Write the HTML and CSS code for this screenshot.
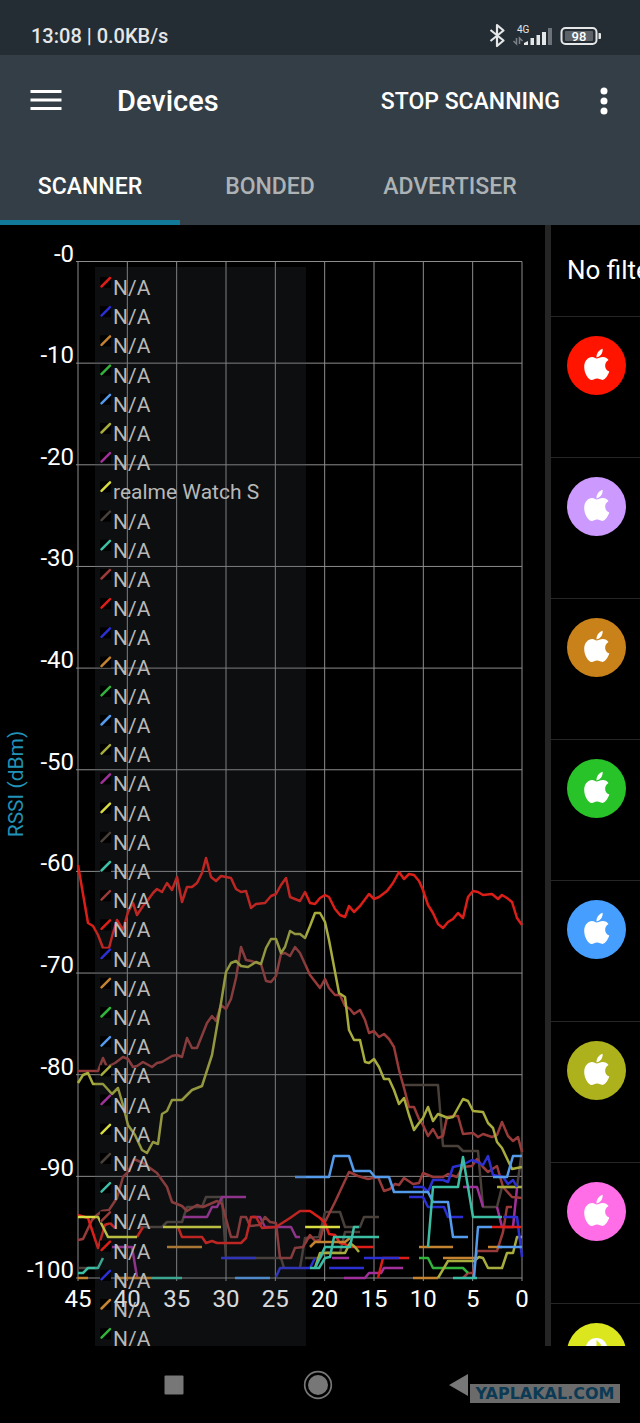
FILE: index.html
```html
<!DOCTYPE html>
<html lang="en">
<head>
    <meta charset="UTF-8">
    <meta name="viewport" content="width=device-width, initial-scale=1.0">
    <title>Devices</title>
    <link rel="stylesheet" href="styles.css">
</head>
<body>
    <div class="status-bar">
        <span>13:08 | 0.0KB/s</span>
        <svg class="status-icons" width="114" height="28" viewBox="488 22 114 28">
            <path d="M490.500 30L503.500 40.500L497 46V25L503.500 30.500L490.500 41" fill="none" stroke="#e4e6e8" stroke-width="2.200" stroke-linejoin="round"/>
            <text x="517" y="33" class="net-label">4G</text>
            <path d="M516.500 38v6l-3-3M519.500 44v-6l3 3" fill="none" stroke="#7c8186" stroke-width="1.500"/>
            <path d="M524 45v-2l4-2v4zM530.500 45v-7h3.500v7zM536.500 45v-10h3.500v10zM542 45v-13h4v13z" fill="#e4e6e8"/>
            <path d="M548 45v-17h4v17z" fill="#6c7277"/>
            <rect x="561.500" y="28" width="35" height="16" rx="4" fill="none" stroke="#e4e6e8" stroke-width="2"/>
            <rect x="565" y="31" width="28" height="10" rx="1" fill="#5c6268"/>
            <path d="M598.500 33h1.500q1 0 1 1v4q0 1-1 1h-1.500z" fill="#e4e6e8"/>
            <text x="579" y="41" class="battery-label">98</text>
        </svg>
    </div>

    <header>
        <div class="toolbar">
            <button class="icon-button" type="button" aria-label="Menu">
                <svg width="32" height="24" viewBox="0 0 32 24">
                    <path d="M0.500 2.500h31M0.500 11h31M0.500 19.500h31" stroke="#fff" stroke-width="3"/>
                </svg>
            </button>
            <h1>Devices</h1>
            <button class="scan-button" type="button">STOP SCANNING</button>
            <button class="icon-button" type="button" aria-label="More options">
                <svg width="8" height="28" viewBox="0 0 8 28" fill="#fff">
                    <circle cx="4" cy="4" r="3.500"/>
                    <circle cx="4" cy="14" r="3.500"/>
                    <circle cx="4" cy="24" r="3.500"/>
                </svg>
            </button>
        </div>
        <nav class="tabs">
            <button class="tab active" type="button">SCANNER</button>
            <button class="tab" type="button">BONDED</button>
            <button class="tab" type="button">ADVERTISER</button>
        </nav>
    </header>

    <main>
        <svg class="chart" viewBox="0 225 545 1121" preserveAspectRatio="xMidYMin meet">
            <g id="grid"></g>
            <g class="series">
                <g class="brown">
                    <polyline points="404,1085 438,1085 443,1146 458,1146 463,1151 478,1151 483,1207 497,1207 502,1187 517,1187 522,1151"/>
                    <polyline points="300,1268 305,1238 319,1237 325,1212 340,1212 345,1227 360,1227 364,1217 379,1217"/>
                    <polyline points="305,1258 320,1258 325,1252 340,1253 345,1232 360,1232"/>
                    <polyline points="138,1227 162,1227 167,1222 182,1222 187,1207 202,1207 206,1197 222,1197 226,1258 281,1258 284,1268"/>
                    <polyline points="78,1268 97,1268"/>
                </g>
                <g class="purple">
                    <polyline points="112,1247 132,1247 137,1277"/>
                    <polyline points="183,1217 207,1217 212,1207 217,1207 222,1197 246,1197"/>
                    <polyline points="252,1217 260,1217 265,1227 291,1227 296,1237 300,1237"/>
                    <polyline points="332,1258 349,1258"/>
                    <polyline points="344,1278 365,1278 369,1273 381,1273 384,1268 403,1268"/>
                    <polyline points="463,1187 477,1187 483,1207"/>
                    <polyline points="497,1207 502,1227 513,1227 517,1188"/>
                </g>
                <g class="maroon">
                    <polyline points="78,1071 98,1071 103,1058 107,1067 115,1063 123,1057 128,1059 133,1067 137,1066 143,1062 152,1067 157,1063 162,1062 172,1056 177,1055 182,1057 187,1038 192,1048 197,1048 207,1023 212,1016 216,1021 221,1005 226,1009 231,999 236,978 241,947 246,960 251,961 261,964 266,981 271,982 276,976 281,954 285,953 290,956 295,947 300,953 305,964 310,975 320,988 325,979 329,988 335,995 340,995 345,1006 350,1009 354,1014 360,1010 365,1020 369,1033 374,1031 379,1037 384,1034 389,1039 394,1047 399,1070 404,1088 409,1107 414,1107 419,1119 423,1125 428,1136 433,1129 438,1138 443,1136 447,1117 453,1116 458,1116 463,1134 473,1133 478,1137 483,1134 492,1137 497,1135 502,1122 508,1136 513,1141 518,1137 522,1152"/>
                    <polyline points="78,1240 83,1239 92,1220 97,1215 102,1211 109,1210 117,1198 123,1177 128,1172 134,1159 143,1163 157,1173 167,1187 172,1202 182,1206 187,1211 197,1205 203,1207 217,1201 222,1204 231,1237 237,1237 241,1217 246,1217 250,1226 260,1225 265,1217 270,1222 276,1223 280,1258 291,1258 295,1248 303,1247 310,1235 315,1241 320,1240 325,1222 335,1202 349,1172 358,1176 368,1179 378,1177 384,1191 390,1189 395,1184 399,1185 404,1178 413,1184 419,1183 423,1173 433,1177 443,1177 448,1174 457,1177 463,1167 472,1166 477,1159 483,1167 488,1172 497,1166 503,1187 512,1197 522,1198"/>
                    <polyline points="463,1278 468,1273 473,1273 477,1251 497,1251 503,1232 507,1207 512,1207"/>
                </g>
                <g class="red">
                    <polyline points="78,865 88,923 93,926 98,935 103,948 109,948 113,933 117,920 123,930 128,912 133,903 137,915 143,906 148,900 153,893 157,889 162,892 167,883 172,890 177,877 182,902 187,887 192,887 197,883 202,873 206,858 211,877 216,881 221,876 231,878 236,889 241,892 246,891 251,908 256,904 265,903 271,896 276,894 281,885 286,878 290,897 295,899 300,901 305,892 310,903 315,904 320,898 325,895 329,897 335,909 340,915 345,917 349,906 354,912 360,906 369,894 374,899 379,897 387,891 393,883 399,872 404,879 409,874 414,875 419,881 423,890 428,905 433,913 438,924 443,928 448,922 453,919 458,913 463,918 468,897 473,891 478,892 483,895 492,894 498,899 502,895 507,898 512,902 517,918 522,925"/>
                    <polyline points="78,1215 88,1218 98,1248 105,1225 110,1223 115,1228"/>
                    <polyline points="137,1237 143,1227"/>
                    <polyline points="178,1227 182,1237 202,1237 206,1243 212,1241 217,1243 241,1243 246,1238 251,1217 256,1217 262,1228 276,1227 290,1218 300,1211 310,1211 320,1218 325,1223 329,1234 335,1235 340,1243 345,1244 350,1247 374,1247"/>
                    <polyline points="378,1278 383,1258 409,1258"/>
                </g>
                <g class="orange">
                    <polyline points="78,1278 88,1278"/>
                    <polyline points="117,1278 152,1278"/>
                    <polyline points="167,1247 202,1247"/>
                    <polyline points="310,1247 315,1242 345,1242 350,1238"/>
                    <polyline points="419,1247 453,1247"/>
                    <polyline points="413,1278 438,1278"/>
                    <polyline points="488,1247 502,1247"/>
                </g>
                <g class="green">
                    <polyline points="419,1258 428,1258 433,1268 463,1268 468,1273"/>
                </g>
                <g class="olive">
                    <polyline points="78,1083 83,1075 88,1073 93,1084 103,1084 112,1094 118,1088 123,1105 128,1125 135,1135 142,1150 147,1153 153,1142 158,1144 162,1114 167,1111 172,1100 182,1100 192,1090 202,1086 212,1055 221,1003 226,972 231,963 236,961 241,966 248,967 256,962 261,964 266,948 271,939 276,939 281,953 285,947 290,931 295,934 300,934 305,938 310,926 315,913 320,913 325,922 329,940 339,993 345,997 349,1030 354,1040 360,1040 365,1062 369,1063 374,1059 379,1067 384,1079 389,1079 394,1090 399,1104 404,1098 409,1115 414,1130 419,1123 423,1118 428,1107 433,1121 438,1114 448,1118 453,1117 463,1099 468,1101 473,1111 483,1112 488,1123 493,1128 497,1142 502,1148 512,1169 522,1167"/>
                    <polyline points="315,1268 320,1253 345,1253 350,1243 355,1247 359,1252"/>
                    <polyline points="438,1278 448,1261 474,1261 479,1257 483,1258 488,1268 502,1268 507,1253 513,1253 517,1237 522,1237"/>
                    <polyline points="497,1187 522,1187"/>
                </g>
                <g class="orange">
                    <polyline points="443,1258 477,1258"/>
                </g>
                <g class="yellow">
                    <polyline points="78,1217 98,1217 108,1237 137,1237"/>
                    <polyline points="163,1227 221,1227"/>
                    <polyline points="305,1227 340,1227"/>
                </g>
                <g class="blue">
                    <polyline points="221,1258 256,1258"/>
                    <polyline points="276,1277 280,1268 310,1268 315,1258"/>
                    <polyline points="329,1268 364,1268"/>
                    <polyline points="364,1258 399,1258"/>
                    <polyline points="413,1187 423,1187 428,1192 433,1180 443,1180 448,1182 453,1167 462,1165 472,1160 477,1162 483,1165 488,1156 493,1175 503,1177 508,1184 513,1180 517,1187"/>
                    <polyline points="409,1197 423,1197 428,1207 444,1207 448,1217 463,1217"/>
                    <polyline points="503,1217 517,1217 522,1257"/>
                </g>
                <g class="sky">
                    <polyline points="235,1278 270,1278"/>
                    <polyline points="295,1177 329,1177 334,1156 349,1156 354,1171 370,1171 375,1177 389,1177 394,1192 428,1192 433,1202 448,1202 453,1237 468,1237"/>
                    <polyline points="474,1278 478,1227 492,1227"/>
                    <polyline points="493,1177 507,1177 513,1156 522,1156"/>
                    <polyline points="497,1247 522,1247"/>
                </g>
                <g class="teal">
                    <polyline points="78,1273 83,1273 88,1268 98,1268 103,1258"/>
                    <polyline points="152,1278 182,1278"/>
                    <polyline points="310,1268 319,1268 325,1258 330,1257 334,1237 379,1237"/>
                    <polyline points="315,1268 320,1258 325,1247 350,1247 354,1227 359,1227"/>
                    <polyline points="428,1247 433,1187 458,1187 463,1157 473,1217 502,1217"/>
                    <polyline points="453,1278 477,1278"/>
                </g>
                <g class="red">
                    <polyline points="492,1227 522,1227"/>
                </g>
            </g>
            <text class="axis-title" transform="translate(23 784) rotate(-90)">RSSI (dBm)</text>
            <rect class="legend-panel" x="95" y="267" width="211" height="1079"/>
            <g id="legend"></g>
        </svg>

        <section class="device-list">
            <div class="filter">No filter</div>
            <ul id="devices"></ul>
        </section>
    </main>

    <footer>
        <button type="button" aria-label="Recent apps">
            <svg width="30" height="30" viewBox="0 0 30 30"><rect x="5.500" y="5.500" width="19" height="19" rx="1" fill="#777"/></svg>
        </button>
        <button type="button" aria-label="Home">
            <svg width="30" height="30" viewBox="0 0 30 30">
                <circle cx="15" cy="15" r="13.300" fill="none" stroke="#777" stroke-width="1.700"/>
                <circle cx="15" cy="15" r="10" fill="#777"/>
            </svg>
        </button>
        <button type="button" aria-label="Back">
            <svg width="30" height="30" viewBox="0 0 30 30"><path d="M2 15L21 4V26Z" fill="#777"/></svg>
        </button>
        <span class="watermark">YAPLAKAL.COM</span>
    </footer>

    <script src="script.js"></script>
</body>
</html>
```
FILE: styles.css
```css
* {
    box-sizing: border-box;
}
body {
    margin: 0;
    height: 100vh;
    display: flex;
    flex-direction: column;
    background-color: #000;
    color: #fff;
    font-family: Roboto, sans-serif;
    overflow: hidden;
}
button {
    background: none;
    border: none;
    padding: 0;
    color: inherit;
    font-family: inherit;
    cursor: pointer;
}
svg {
    display: block;
}
.status-bar {
    display: flex;
    justify-content: space-between;
    align-items: center;
    height: 55px;
    padding: 17px 38px 0 31px;
    background-color: #252d34;
    color: #e4e6e8;
    font-size: 20px;
    font-weight: 500;
}
.net-label {
    font-size: 10px;
    font-weight: 400;
    fill: #e4e6e8;
}
.battery-label {
    font-size: 13px;
    font-weight: 500;
    text-anchor: middle;
    fill: #fff;
}
header {
    background-color: #333e47;
}
.toolbar {
    display: flex;
    align-items: center;
    height: 92px;
    padding: 0 32px 0 30px;
}
h1 {
    flex: 1;
    margin: 0 0 0 55px;
    font-size: 29px;
    font-weight: 500;
}
.scan-button {
    margin-right: 40px;
    font-size: 23px;
    font-weight: 500;
}
.tabs {
    display: flex;
}
.tab {
    width: 180px;
    height: 78px;
    border-top: 5px solid transparent;
    border-bottom: 5px solid transparent;
    color: #adb2b5;
    font-size: 23px;
    font-weight: 500;
}
.tab.active {
    color: #fff;
    border-bottom-color: #117a9a;
}
main {
    flex: 1;
    min-height: 0;
    display: flex;
    overflow: hidden;
}
.chart {
    flex: 1;
    min-width: 0;
    height: 100%;
}
.grid-line {
    stroke: #8c8c8c;
    stroke-width: 1;
}
.axis-label {
    font-size: 24px;
    fill: #fff;
}
.axis-label.y {
    text-anchor: end;
}
.axis-label.x {
    text-anchor: middle;
}
.axis-title {
    font-size: 21px;
    text-anchor: middle;
    fill: #2192b8;
}
.series {
    fill: none;
    stroke-width: 2.5;
    stroke-linejoin: round;
}
.legend-panel {
    fill: #40464c;
    fill-opacity: 0.2;
}
.legend-text {
    font-size: 21px;
    fill: #b8b8b8;
}
.swatch {
    stroke-width: 2.5;
    stroke-linecap: round;
}
.red { stroke: #dc1e19; }
.blue { stroke: #2c30d2; }
.orange { stroke: #c48330; }
.green { stroke: #32b43c; }
.sky { stroke: #559bec; }
.olive { stroke: #a8ac3c; }
.purple { stroke: #a2309c; }
.yellow { stroke: #d8dc40; }
.brown { stroke: #4a403a; }
.teal { stroke: #3cbea5; }
.maroon { stroke: #983a3a; }
.device-list {
    width: 95px;
    border-left: 6px solid #252525;
    overflow: hidden;
}
.filter {
    height: 91px;
    padding-left: 16px;
    font-size: 26px;
    line-height: 90px;
    white-space: nowrap;
}
ul {
    margin: 0;
    padding: 0;
    list-style: none;
}
.device {
    height: 141px;
    padding: 19px 16px;
    border-top: 1px solid #262626;
}
footer {
    position: relative;
    display: grid;
    grid-template-columns: repeat(3, 144px);
    justify-content: center;
    align-items: center;
    justify-items: center;
    height: 77px;
    padding-right: 4px;
}
footer button {
    padding: 8px;
}
.watermark {
    position: absolute;
    right: 20px;
    bottom: 20px;
    width: 150px;
    background-color: #6b6b6b;
    color: #0c3a54;
    font-family: "DejaVu Sans", sans-serif;
    font-size: 16px;
    font-weight: bold;
    line-height: 19px;
    text-align: center;
}
```
FILE: script.js
```js
const legendColors = ['red', 'blue', 'orange', 'green', 'sky', 'olive', 'purple', 'yellow', 'brown', 'teal', 'maroon'];
const deviceColors = ['#ff1400', '#cc99ff', '#c9821a', '#28c328', '#469fff', '#adb11b', '#ff6ee6'];

// plot area edges, in chart units
const plot = { left: 78, right: 522, top: 261.5, bottom: 1278 };

function drawGrid() {
    let out = '';
    for (let i = 0; i <= 10; i++) {
        const y = plot.top + (plot.bottom - plot.top) * i / 10;
        out += `<line class="grid-line" x1="${plot.left - 2}" y1="${y}" x2="${plot.right}" y2="${y}"/>`;
        out += `<text class="axis-label y" x="74" y="${y}">-${i * 10}</text>`;
    }
    for (let i = 0; i <= 9; i++) {
        const x = plot.left + (plot.right - plot.left) * i / 9;
        out += `<line class="grid-line" x1="${x}" y1="${plot.top}" x2="${x}" y2="${plot.bottom + 3}"/>`;
        out += `<text class="axis-label x" x="${x}" y="1307">${45 - i * 5}</text>`;
    }
    document.getElementById('grid').innerHTML = out;
}

function drawLegend() {
    let out = '';
    for (let i = 0; i < 37; i++) {
        const y = 294 + i * 29.2;
        const name = i === 7 ? 'realme Watch S' : 'N/A';
        out += `<rect x="100" y="${y - 17}" width="11" height="11" fill="#000"/>`;
        out += `<line class="swatch ${legendColors[i % 11]}" x1="101.5" y1="${y - 7.5}" x2="110" y2="${y - 16}"/>`;
        out += `<text class="legend-text" x="113" y="${y + 1}">${name}</text>`;
    }
    document.getElementById('legend').innerHTML = out;
}

function drawDevices() {
    const apple = '<path fill="#fff" d="M29.500 21.500C29.300 17.500 32 13.800 35.600 12.800C36.200 16.800 33.200 21 29.500 21.500ZM29.600 22.600C31.500 22.600 33 21 35.800 21C38.300 21 40.300 22.200 41.500 23.900C36.500 26.800 37.400 33.700 42.300 35.600C41 39.300 38.500 43.800 35.500 43.900C33.400 43.900 32.700 42.600 30.100 42.600C27.500 42.600 26.700 43.900 24.700 44C21.200 44 17.200 37.200 17.200 31C17.200 24.800 21.200 21.100 25 21.100C27.100 21.100 28.600 22.600 29.600 22.600Z"/>';
    const watch = '<circle cx="29.500" cy="26" r="11" fill="#fff"/><path d="M29.500 17l5 5-5 4z" fill="#dbe61e"/>';
    let out = '';
    deviceColors.concat('#dbe61e').forEach((color, i) => {
        out += `<li class="device"><svg width="59" height="59" viewBox="0 0 59 59"><circle cx="29.500" cy="29.500" r="29.500" fill="${color}"/>${i < 7 ? apple : watch}</svg></li>`;
    });
    document.getElementById('devices').innerHTML = out;
}

drawGrid();
drawLegend();
drawDevices();
```
